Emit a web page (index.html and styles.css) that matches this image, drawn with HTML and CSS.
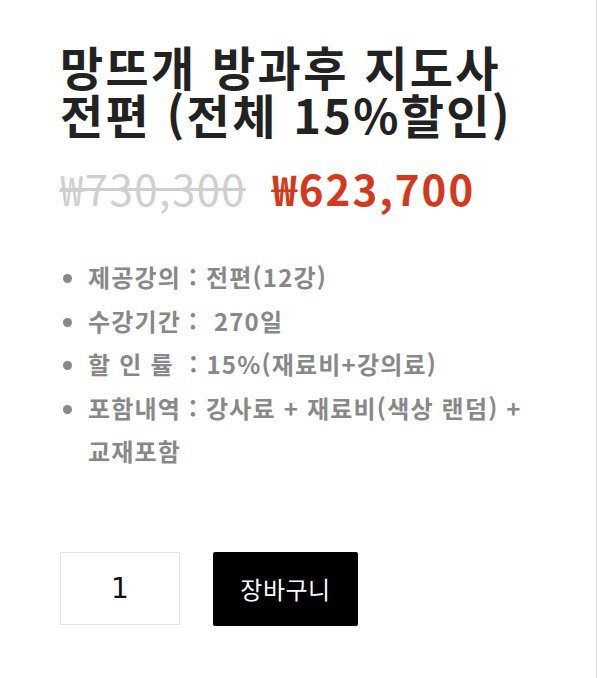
FILE: index.html
```html
<!DOCTYPE html>
<html lang="ko">
<head>
<meta charset="utf-8">
<link rel="stylesheet" href="styles.css">
</head>
<body>
<div class="page">
  <div class="product">
    <h1 class="title">망뜨개 방과후 지도사<br>전편 (전체 15%할인)</h1>
    <div class="prices">
      <span class="old">₩730,300</span>
      <span class="new">₩623,700</span>
    </div>
    <ul class="info">
      <li>제공강의 : 전편(12강)</li>
      <li>수강기간 :&nbsp; 270일</li>
      <li>할 인 률&nbsp; : 15%(재료비+강의료)</li>
      <li>포함내역 : 강사료 + 재료비(색상 랜덤) + 교재포함</li>
    </ul>
    <div class="buy">
      <div class="qty">1</div>
      <button class="cart">장바구니</button>
    </div>
  </div>
</div>
</body>
</html>
```
FILE: styles.css
```css
html, body {
  margin: 0;
  padding: 0;
  background: #fff;
}
body {
  font-family: "Noto Sans CJK KR", "Noto Sans", sans-serif;
}
.page {
  width: 596px;
  min-height: 678px;
  border-right: 1px solid #d9d9d9;
}
.product {
  padding: 42px 60px 0 60px;
}
.title {
  margin: 0;
  font-size: 47px;
  line-height: 48px;
  font-weight: 700;
  color: #222;
  letter-spacing: 2.3px;
}
.prices {
  margin-top: 22px;
  display: flex;
  align-items: baseline;
  gap: 26px;
  font-size: 42px;
  line-height: 56px;
}
.old {
  color: #cfcfcf;
  text-decoration: line-through;
  text-decoration-thickness: 3px;
  font-weight: 400;
  letter-spacing: 1.4px;
}
.new {
  color: #d33a1d;
  font-weight: 700;
  letter-spacing: 2px;
}
.info {
  margin: 39px 0 0 0;
  padding: 0 0 0 28px;
  color: #888;
  font-size: 24px;
  font-weight: 700;
  line-height: 43.5px;
  letter-spacing: 1.2px;
}
.buy {
  margin-top: 79px;
  display: flex;
  gap: 33px;
}
.qty {
  width: 118px;
  height: 71px;
  border: 1px solid #e3e3e3;
  display: flex;
  align-items: center;
  justify-content: center;
  font-size: 28px;
  font-family: "DejaVu Sans", sans-serif;
  color: #111;
}
.cart {
  width: 145px;
  height: 74px;
  background: #000;
  color: #fff;
  border: 0;
  border-radius: 2px;
  font-family: "Noto Sans CJK KR", sans-serif;
  font-size: 24px;
  letter-spacing: 0.5px;
  font-weight: 400;
  padding: 0;
}
```
